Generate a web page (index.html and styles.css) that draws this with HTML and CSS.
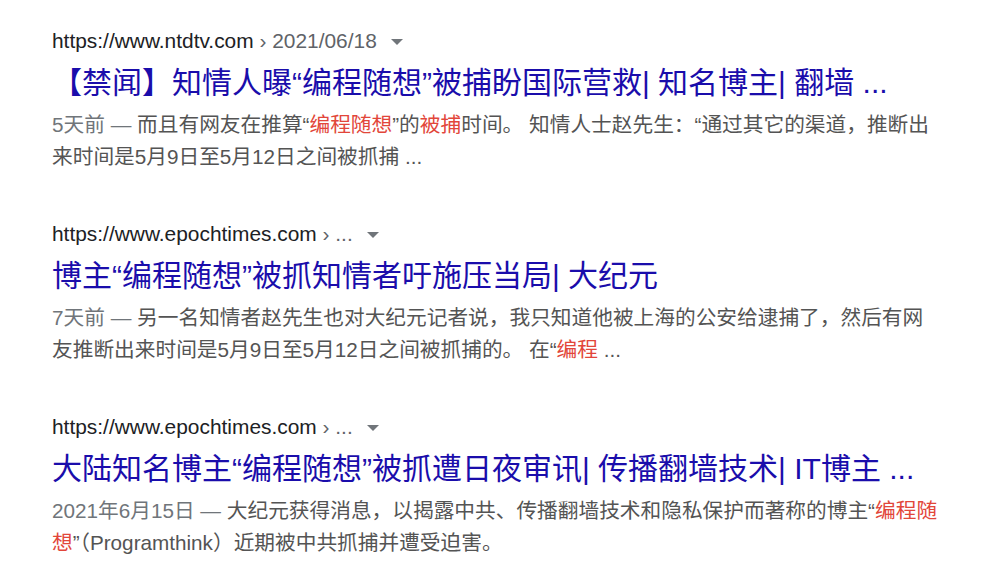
FILE: index.html
```html
<!DOCTYPE html>
<html lang="zh-CN">
<head>
  <meta charset="UTF-8">
  <title>编程随想 - 搜索结果</title>
  <link rel="stylesheet" href="styles.css">
</head>
<body>
<div class="results">

  <div class="result">
    <div class="cite">https://www.ntdtv.com <span class="crumb">› 2021/06/18</span><span class="arrow"></span></div>
    <a class="title" href="#">【禁闻】知情人曝“编程随想”被捕盼国际营救| 知名博主| 翻墙 ...</a>
    <div class="snippet">
      <span class="date">5天前 — </span>而且有网友在推算“<em>编程随想</em>”的<em>被捕</em>时间。 知情人士赵先生：“通过其它的渠道，推断出来时间是5月9日至5月12日之间被抓捕 ...
    </div>
  </div>

  <div class="result">
    <div class="cite">https://www.epochtimes.com <span class="crumb">› ...</span><span class="arrow"></span></div>
    <a class="title" href="#">博主“编程随想”被抓知情者吁施压当局| 大纪元</a>
    <div class="snippet">
      <span class="date">7天前 — </span>另一名知情者赵先生也对大纪元记者说，我只知道他被上海的公安给逮捕了，然后有网友推断出来时间是5月9日至5月12日之间被抓捕的。 在“<em>编程</em> ...
    </div>
  </div>

  <div class="result">
    <div class="cite">https://www.epochtimes.com <span class="crumb">› ...</span><span class="arrow"></span></div>
    <a class="title" href="#">大陆知名博主“编程随想”被抓遭日夜审讯| 传播翻墙技术| IT博主 ...</a>
    <div class="snippet">
      <span class="date">2021年6月15日 — </span>大纪元获得消息，以揭露中共、传播翻墙技术和隐私保护而著称的博主“<em>编程随想</em>”（Programthink）近期被中共抓捕并遭受迫害。
    </div>
  </div>

</div>
</body>
</html>
```

FILE: styles.css
```css
body {
  margin: 0;
  background: #fff;
  font-family: 'Liberation Sans', 'Noto Sans CJK SC', sans-serif;
  color: #4d5156;
}

.results {
  padding: 26px 0 0 52px;
  display: flex;
  flex-direction: column;
  gap: 46px;
}

.result {
  width: 920px;
}

.cite {
  font-size: 20.9px;
  line-height: 30px;
  height: 30px;
  color: #202124;
  white-space: nowrap;
}

.crumb {
  color: #5f6368;
}

.arrow {
  display: inline-block;
  vertical-align: middle;
  width: 0;
  height: 0;
  margin-left: 14px;
  border-left: 6px solid transparent;
  border-right: 6px solid transparent;
  border-top: 6px solid #70757a;
}

.title {
  display: block;
  margin-top: 7px;
  font-size: 30px;
  line-height: 40px;
  color: #1a0dab;
  text-decoration: none;
  white-space: nowrap;
}

.snippet {
  margin-top: 6px;
  width: 890px;
  font-size: 20.7px;
  line-height: 32px;
  color: #545454;
}

.date {
  color: #70757a;
}

em {
  font-style: normal;
  color: #e2463a;
}
```
